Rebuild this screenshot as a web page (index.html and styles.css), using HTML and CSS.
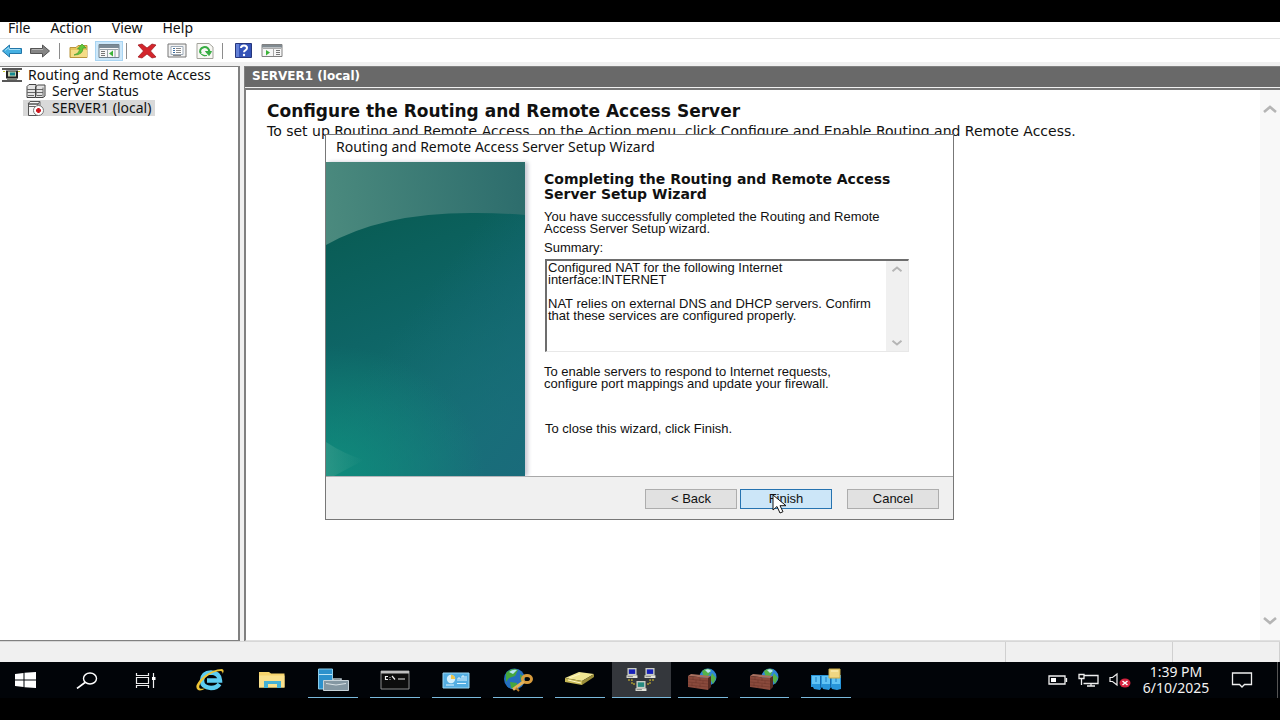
FILE: index.html
```html
<!DOCTYPE html>
<html lang="en">
<head>
<meta charset="utf-8">
<title>Routing and Remote Access</title>
<link rel="stylesheet" href="styles.css">
</head>
<body>
<svg class="defs" aria-hidden="true">
  <defs>
    <symbol id="chev-up" viewBox="0 0 16 10"><path d="M2 8 8 3l6 5" fill="none" stroke="currentColor" stroke-width="2.6"/></symbol>
    <symbol id="chev-down" viewBox="0 0 16 10"><path d="M2 2 8 7l6-5" fill="none" stroke="currentColor" stroke-width="2.6"/></symbol>
    <symbol id="firewall" viewBox="0 0 32 24">
      <circle cx="21" cy="9" r="8.5" fill="#2f86d8"/>
      <path d="M15 3q5-4 9-1l-2 5-5 3zM25 5l4 5-3 6-3-5z" fill="#55b34a"/>
      <path d="M18 2q4-2 6 1l-3 2z" fill="#bfe6f5"/>
      <path d="m1 8 3-2 20 2-3 2z" fill="#a8705f"/>
      <path d="m1 8 20 2v12L1 19z" fill="#8a4a3c"/>
      <path d="m21 10 3-2v11l-3 3z" fill="#552a22"/>
      <path d="m1 11 20 2M1 14l20 2M1 17l20 2M6 9v3M13 10v3M9 12v3M16 13v3M5 15v3M13 16v3M9 18v2" stroke="#6b342a" stroke-width=".5"/>
    </symbol>
    <symbol id="pc" viewBox="0 0 12 11">
      <path d="M1 0h10v8H1z" fill="#c9ccc4"/><path d="M2.500 1.500h7v5h-7z" fill="currentColor"/>
      <path d="M0 8h12v3H0z" fill="#e4e5dc"/><path d="M1 9.500h6" stroke="#777"/>
    </symbol>
  </defs>
</svg>
<div class="screen">
  <nav class="menubar">
    <button>File</button><button>Action</button><button>View</button><button>Help</button>
  </nav>
  <div class="toolbar">
    <button aria-label="Back"><svg width="22" height="16" viewBox="0 0 22 16"><path d="m1.500 8 7-6v3.500h12v5h-12V14z" fill="#45b0e2" stroke="#2376a8"/><path d="M4 7.500 8 4.500v2h11" fill="none" stroke="#a4def5"/></svg></button>
    <button aria-label="Forward"><svg width="22" height="16" viewBox="0 0 22 16"><path d="m20.500 8-7-6v3.500h-12v5h12V14z" fill="#858585" stroke="#555"/><path d="M3 6.500h11" stroke="#b5b5b5"/></svg></button>
    <span class="sep"></span>
    <button aria-label="Up one level"><svg width="20" height="16" viewBox="0 0 20 16"><path d="M1 4.500h6l2-2h9v12H1z" fill="#e9c65c" stroke="#b9953d"/><path d="M2 7h16v7H2z" fill="#f5dc86"/><path d="M5 12q5-1 6-6H8.500L13 1l4 4h-3q0 7-9 7z" fill="#62c83c" stroke="#3d9929" stroke-width=".7"/></svg></button>
    <button class="on" aria-label="Show console tree"><svg width="22" height="14" viewBox="0 0 22 14"><path d="M1 .5h20v13H1z" fill="#f7f7f7" stroke="#70808b"/><path d="M1 1h20v3H1z" fill="#7b8a95"/><path d="M2 5.500h18M9.500 5v8M17 6v7" stroke="#9aa3aa"/><path d="M3 7.500h4M3 9.500h4M3 11.500h4" stroke="#777"/><path d="m11 9.500 4-3v6z" fill="#3bb338"/></svg></button>
    <span class="sep close"></span>
    <button aria-label="Delete"><svg width="22" height="16" viewBox="0 0 22 16"><path d="m2 2 4-1 5 4 5-4 4 1-5.500 6L20 14l-4 1-5-4-5 4-4-1 5.500-6z" fill="#d3252c" stroke="#99161b" stroke-width=".7"/></svg></button>
    <button class="apart" aria-label="Properties"><svg width="20" height="15" viewBox="0 0 20 15"><path d="M1 1h18v13H1z" fill="#f2f2f2" stroke="#777"/><path d="M4 3.500h12v8H4z" fill="#fff" stroke="#9daab8"/><path d="M6 5.500h2M6 7.500h2M6 9.500h2" stroke="#3b6ca0"/><path d="M9 5.500h5M9 7.500h5M9 9.500h5M6 12.500h8" stroke="#888"/></svg></button>
    <button class="apart" aria-label="Refresh"><svg width="18" height="16" viewBox="0 0 18 16"><path d="M1 .5h12l4 3.500v11.500H1z" fill="#f8f8f4" stroke="#a3a39b"/><path d="M5 10.500A4.500 4 0 1 1 13 9" fill="none" stroke="#37ad43" stroke-width="2"/><path d="m9.500 8.500 6 0-2.500 4zM5 11q3 3 6 1.500" fill="#37ad43" stroke="#37ad43"/></svg></button>
    <span class="sep"></span>
    <button class="apart" aria-label="Help"><svg width="17" height="15" viewBox="0 0 17 15"><path d="M.5.500h16v14H.5z" fill="#3453b8" stroke="#26367c"/><path d="M1 1h3v13H1z" fill="#6380d6"/><path d="M6 5q0-2.500 3-2.500T12 5q0 1.500-1.700 2.300Q9 8 9 9.300" fill="none" stroke="#fff" stroke-width="2"/><circle cx="9" cy="12" r="1.200" fill="#fff"/></svg></button>
    <button class="apart" aria-label="Show action pane"><svg width="22" height="13" viewBox="0 0 22 13"><path d="M1 .5h20v12H1z" fill="#f7f7f7" stroke="#808080"/><path d="M1 1h20v2.500H1z" fill="#808a90"/><path d="M2 4.500h18M12.500 5v7" stroke="#aaa"/><path d="M15 6.500h4M15 8.500h4M15 10.500h4" stroke="#777"/><path d="m5 6 4 2.500-4 3z" fill="#3bb338"/></svg></button>
  </div>

  <main class="panes">
    <aside class="tree">
      <div class="node">
        <svg width="20" height="14" viewBox="0 0 20 14"><path d="M0 1h20M0 13h20" stroke="#222" stroke-width="1.600"/><path d="M4 2.500h12v8H4z" fill="#222"/><path d="M6 3.500h8v5H6z" fill="#c7d3b3"/><path d="M8 4.500h5v3H8z" fill="#168b91"/><path d="M5 10h10v2H5z" fill="#7f8378"/><path d="M1 3h2v1H1zM16 3h2v1h-2z" fill="#c8c82f"/></svg>
        <span>Routing and Remote Access</span>
      </div>
      <div class="node child">
        <svg width="20" height="14" viewBox="0 0 20 14"><path d="M1 2.500 3 .5h7v11l-1 2H1zM9.500 3l2-2H19v11l-2 1.500H9.500z" fill="#e4e4e4" stroke="#444"/><path d="M1 5.500h8M1 8.500h8M10 5.500h7M10 8.500h7M17 3.500v9M2 11.500h6M11 11.500h5" stroke="#666"/></svg>
        <span>Server Status</span>
      </div>
      <div class="node child">
        <div class="selected">
          <svg width="20" height="15" viewBox="0 0 20 15"><path d="M2 3 4 .5h10L12 3zM2.500 3H12v11.500H2.500z" fill="#f5f5f5" stroke="#555"/><path d="M3 5.500h8M14 1v5" stroke="#666"/><circle cx="12.500" cy="9.500" r="5" fill="#fff" stroke="#777"/><path d="M12.500 7v5M10 9.500h5" stroke="#cc141c" stroke-width="2.400"/></svg>
          <span>SERVER1 (local)</span>
        </div>
      </div>
    </aside>
    <section class="detail">
      <h1 class="detail-title">SERVER1 (local)</h1>
      <div class="detail-body">
        <div class="detail-text">
          <h2>Configure the Routing and Remote Access Server</h2>
          <p>To set up Routing and Remote Access, on the Action menu, click Configure and Enable Routing and Remote Access.</p>
        </div>
        <div class="scroll page"><svg width="16" height="10"><use href="#chev-up"/></svg><svg width="16" height="10"><use href="#chev-down"/></svg></div>
      </div>
    </section>
  </main>
  <footer class="status"><span></span><span></span><span></span></footer>

  <div class="taskbar">
    <button class="start" aria-label="Start"><svg width="21" height="16" viewBox="0 0 21 16"><path d="M0 2 8.500 1v6.500H0zM9.500.800 21 0v7.500H9.500zM0 8.500h8.500V15L0 14zM9.500 8.500H21V16l-11.500-.8z" fill="#fff"/></svg></button>
    <div class="tasks">
      <button aria-label="Search"><svg width="22" height="17" viewBox="0 0 22 17"><ellipse cx="14" cy="6.500" rx="6.500" ry="5.500" fill="none" stroke="#fff" stroke-width="1.400"/><path d="m9 10.500-8 6" stroke="#fff" stroke-width="1.600"/></svg></button>
      <button class="view" aria-label="Task view"><svg width="22" height="15" viewBox="0 0 22 15"><path d="M1.500 0v2.500h12V0M1.500 15v-2.500h12V15M1.500 4.500h12v6h-12zM18.500 0v4M18.500 7v8" fill="none" stroke="#eee" stroke-width="1.200"/><path d="M17 4h3.500v3H17z" fill="#fff"/></svg></button>
      <button aria-label="Internet Explorer"><svg width="30" height="24" viewBox="0 0 30 24"><path d="M24.500 16Q22 20 16 20 7 19.500 7 12.500 7.500 5 16 4.500q8.500.5 9 8H12" fill="none" stroke="#5ccdf2" stroke-width="4.400"/><path d="M3 22q-5-4 5-13Q18 1 27 1q3 1 .5 5 .5-3-2-3Q18 3 10 10 2 18 5 20.500q3 1 7-1-6 4-9 2.500z" fill="#eec436"/></svg></button>
      <button aria-label="File Explorer"><svg width="28" height="18" viewBox="0 0 28 18"><path d="M1 1h10l2 1.500h13.500V16.500H1z" fill="#f6d36c"/><path d="M1 4.500h25.500v12H1z" fill="#fae18c"/><path d="M6 10h17v7h-4v-4h-9v4H6z" fill="#45b1d5"/></svg></button>
      <button class="run" aria-label="Server Manager"><svg width="32" height="24" viewBox="0 0 32 24"><path d="M1.500 1h14v20h-14z" fill="#2c91cc" stroke="#8accea"/><path d="M2 6.500h13" stroke="#bde4f5"/><path d="M16 12.500v-1.500h8v1.500" fill="none" stroke="#b9c6cc" stroke-width="1.600"/><path d="M6.500 12.500h25v10h-25z" fill="#8497a2" stroke="#c8d3d9"/><path d="M9 15.500q10 3 20 0" fill="none" stroke="#d9e2e6"/></svg></button>
      <button class="run" aria-label="Command Prompt"><svg width="30" height="20" viewBox="0 0 30 20"><path d="M1 1h28v18H1z" fill="#0d0d0d" stroke="#8c8c8c"/><path d="M1 1h28v2.500H1z" fill="#bfbfbf"/><path d="M8 6.500H5.500v3H8M10 7v.8M10 9v.8M12 6l3 3.500M18 9h7" fill="none" stroke="#eee" stroke-width="1.200"/></svg></button>
      <button class="run" aria-label="Control Panel"><svg width="28" height="17" viewBox="0 0 28 17"><path d="M1 1h26v15H1z" fill="#54aee2" stroke="#9ad7f4"/><circle cx="9" cy="7" r="4.200" fill="#d3effb"/><path d="M9 7V2.800A4.200 4.200 0 0 1 13.200 7z" fill="#efc64b"/><path d="M16 9V6h2v3M20 9V4h2v5M15 11.500h9M4 13h8M24 4v5" stroke="#dff4ff" fill="none"/></svg></button>
      <button class="run" aria-label="Network access"><svg width="32" height="24" viewBox="0 0 32 24"><circle cx="12.500" cy="11" r="10.500" fill="#246fbf"/><path d="M4 5q6-6 12-3l-3 6-6 2-3 4zM8 14l7 1-1 6-5-1zM18 6l5 4-4 4z" fill="#45a63f"/><path d="M7 4q4-3 8-2l-4 4z" fill="#b4e4f4"/><ellipse cx="25" cy="11" rx="4.500" ry="3.500" fill="none" stroke="#d79b3d" stroke-width="3"/><path d="m22 13.500-11 8" stroke="#e4b35a" stroke-width="3"/><path d="m14 20 3 3" stroke="#b67b2a" stroke-width="2"/></svg></button>
      <button class="run" aria-label="Network tool"><svg class="raise" width="32" height="14" viewBox="0 0 32 14"><path d="m1 7 14-6 15 2-12 7z" fill="#f1e793"/><path d="m1 7 17 3v4L1 11z" fill="#c8b955"/><path d="m18 10 12-7v3l-12 8z" fill="#9a8d39"/><path d="m5 7 11-4M4 9l13 3" stroke="#fff8c8"/></svg></button>
      <button class="run active" aria-label="Routing and Remote Access"><svg width="32" height="24" viewBox="0 0 32 24"><use href="#pc" x="1" y="0" width="12" height="10" color="#1720b8"/><use href="#pc" x="19" y="0" width="12" height="10" color="#1720b8"/><use href="#pc" x="10" y="13" width="12" height="10" color="#258a80"/><path d="M3 12h4v4h3M29 12h-4v4h-3" fill="none" stroke="#a99931" stroke-width="1.400" stroke-dasharray="2 1"/></svg></button>
      <button class="run" aria-label="Windows Firewall"><svg width="32" height="24"><use href="#firewall"/></svg></button>
      <button class="run" aria-label="Windows Firewall rules"><svg width="32" height="24"><use href="#firewall"/></svg></button>
      <button class="run" aria-label="Server tools"><svg width="32" height="24" viewBox="0 0 32 24"><path d="M1 7h30v14l-4 1-5-1-1-2-2 3-6-1-1-2-2 3-6-1-1-2H1z" fill="#2795da"/><path d="M2 8h8v8H2zM12 8h8v8h-8zM22 8h8v8h-8z" fill="#62c4f5"/><path d="M6 9v5M16 9v5M26 9v5" stroke="#1b7cc4"/><path d="M10.500 8v12M20.500 8v12" stroke="#126bb0"/><path d="M19 1h11v9H19z" fill="#efd682" stroke="#c9a948"/><path d="M21 3h7" stroke="#fff4c0"/></svg></button>
    </div>
    <div class="tray">
      <svg width="20" height="10" viewBox="0 0 20 10"><path d="M1 1h16v8H1zM18.500 3v4" fill="none" stroke="#eee" stroke-width="1.300"/><path d="M3 3h5v4H3z" fill="#fff"/></svg>
      <svg width="21" height="14" viewBox="0 0 21 14"><path d="M6 2.500h14v8H5.500M9 13h8M13 10.500V13" fill="none" stroke="#eee" stroke-width="1.300"/><path d="M1 1.500h5v4H1zM3.500 5.500V12" fill="#000" stroke="#eee" stroke-width="1.300"/></svg>
      <svg class="volume" width="22" height="16" viewBox="0 0 22 16"><path d="M1 5.500h2.500L8 2v11L3.500 9.500H1z" fill="none" stroke="#eee" stroke-width="1.200"/><ellipse cx="16" cy="11" rx="5.500" ry="4.500" fill="#d5233f"/><path d="m13.500 9 5 4M18.500 9l-5 4" stroke="#fff" stroke-width="1.500"/></svg>
      <div class="clock"><span>1:39 PM</span><span>6/10/2025</span></div>
      <svg width="22" height="16" viewBox="0 0 22 16"><path d="M1.500 1h19v11.500h-7L11 15l-2.500-2.500h-7z" fill="none" stroke="#eee" stroke-width="1.300"/></svg>
    </div>
    <span class="peek"></span>
  </div>

  <div class="wizard" role="dialog" aria-labelledby="wizard-title">
    <div class="wizard-title" id="wizard-title">Routing and Remote Access Server Setup Wizard</div>
    <div class="wizard-body">
      <svg class="banner" viewBox="0 0 199 314" preserveAspectRatio="none" aria-hidden="true">
        <defs>
          <linearGradient id="sky" x1="0" y1="0.200" x2="1" y2="0"><stop offset="0" stop-color="#4b8a7e"/><stop offset="1" stop-color="#2c6c6c"/></linearGradient>
          <linearGradient id="hill" x1="0" y1="0" x2="0.300" y2="1"><stop offset="0" stop-color="#085b52"/><stop offset=".5" stop-color="#0e6566"/><stop offset="1" stop-color="#147474"/></linearGradient>
          <linearGradient id="blue" x1="0" y1="0" x2="1" y2="1"><stop offset=".4" stop-color="#1a6b7b" stop-opacity="0"/><stop offset="1" stop-color="#1a6b7b"/></linearGradient>
          <radialGradient id="glow" cx="0" cy="1" r=".8"><stop offset="0" stop-color="#0f8c7c"/><stop offset="1" stop-color="#0f8c7c" stop-opacity="0"/></radialGradient>
          <linearGradient id="ray"><stop offset="0" stop-color="#3b9c8c" stop-opacity=".6"/><stop offset="1" stop-color="#3b9c8c" stop-opacity="0"/></linearGradient>
        </defs>
        <path d="M0 0h199v314H0z" fill="url(#sky)"/>
        <path d="M0 83Q58 50 150 51q25 0 49 2v261H0z" fill="url(#hill)"/>
        <path d="M0 83Q58 50 150 51q25 0 49 2v261H0z" fill="url(#blue)"/>
        <path d="M0 150h199v164H0z" fill="url(#glow)"/>
        <path d="M0 280q18 12 38 18L8 314H0z" fill="url(#ray)"/>
      </svg>
      <div class="wizard-copy">
        <h3>Completing the Routing and Remote Access<br>Server Setup Wizard</h3>
        <p>You have successfully completed the Routing and Remote<br>Access Server Setup wizard.</p>
        <label for="summary">Summary:</label>
        <div class="summary">
          <textarea id="summary" readonly>Configured NAT for the following Internet
interface:INTERNET

NAT relies on external DNS and DHCP servers. Confirm
that these services are configured properly.</textarea>
          <div class="scroll"><svg width="12" height="8"><use href="#chev-up"/></svg><svg width="12" height="8"><use href="#chev-down"/></svg></div>
        </div>
        <p>To enable servers to respond to Internet requests,<br>configure port mappings and update your firewall.</p>
        <p class="closing">To close this wizard, click Finish.</p>
      </div>
    </div>
    <div class="wizard-actions">
      <button>&lt; Back</button>
      <button class="primary">Finish</button>
      <button class="cancel">Cancel</button>
    </div>
  </div>
  <svg class="cursor" width="15" height="21" viewBox="0 0 15 21" aria-hidden="true"><path d="M1 1v15l4-3.500 3 6.500 3-1.300-3-6h6z" fill="#fff" stroke="#111"/></svg>
</div>
</body>
</html>
```
FILE: styles.css
```css
* { box-sizing: border-box; }
body { margin: 0; background: #000; color: #111; font: 14px/16px "Noto Sans", "Open Sans", sans-serif; }
h1, h2, h3, p { margin: 0; }
button { font: inherit; color: inherit; border: 0; padding: 0; margin: 0; background: none; }
svg { display: block; flex: none; }
.defs { position: absolute; width: 0; height: 0; }
.screen { position: relative; display: flex; flex-direction: column; height: 100vh; min-height: 620px; padding: 22px 0; overflow: hidden; }

.menubar { display: flex; gap: 20px; height: 16px; padding: 0 8px; background: #fff; line-height: 12px; flex: none; }
.menubar button { height: 12px; }
.toolbar { display: flex; align-items: center; gap: 6px; height: 24px; background: #fff; border-top: 1px solid #e3e3e3; flex: none; padding-left: 1px; }
.toolbar .on { display: flex; align-items: center; justify-content: center; width: 28px; height: 20px; background: #cde8fa; border: 1px solid #a8d4f2; }
.toolbar .apart { margin-left: 3px; }
.sep { width: 1px; height: 16px; background: #8c8c8c; margin: 0 3px 0 2px; }
.sep.close { margin: 0 3px 0 -3px; }

.panes { flex: 1; display: flex; gap: 4px; min-height: 0; padding-top: 4px; background: #f0f0f0; }
.tree { width: 240px; background: #fff; border: solid #808080; border-width: 1px 2px 1px 0; flex: none; }
.node { display: flex; align-items: center; gap: 6px; height: 16px; padding-left: 2px; white-space: nowrap; }
.node.child { padding-left: 26px; }
.node:last-child { margin-top: 1px; }
.selected { display: flex; align-items: center; gap: 6px; height: 16px; background: #d9d9d9; margin-left: -3px; padding: 0 4px 0 3px; }
.detail { flex: 1; min-width: 0; display: flex; flex-direction: column; border-left: 1px solid #808080; }
.detail-title { height: 21px; background: #696969; color: #fff; font: bold 12px/19px "DejaVu Sans", sans-serif; padding-left: 7px; border-top: 1px solid #808080; }
.detail-body { flex: 1; display: flex; min-height: 0; background: #fff; margin-top: 1px; border-top: 2px solid #777; border-left: 1px solid #808080; border-bottom: 1px solid #e0e0e0; }
.detail-text { flex: 1; min-width: 0; padding: 11px 0 0 21px; font-family: "DejaVu Sans", sans-serif; white-space: nowrap; }
.detail-text h2 { font-size: 17px; line-height: 20px; }
.detail-text p { font-size: 14px; line-height: 20px; }
.scroll { display: flex; flex-direction: column; justify-content: space-between; align-items: center; width: 22px; padding: 4px 0; background: #f0f0f0; color: #b5b5b5; flex: none; }
.scroll.page { width: 20px; background: #f8f8f8; padding: 14px 0; }
.status { display: flex; height: 21px; background: #f0f0f0; border-top: 1px solid #d7d7d7; flex: none; }
.status span { flex: 1; border-right: 1px solid #d0d0d0; }
.status span:nth-child(2) { flex: none; width: 167px; }
.status span:nth-child(3) { flex: none; width: 107px; }

.taskbar { display: flex; height: 36px; background: #010408; color: #f2f2f2; flex: none; }
.start { display: flex; align-items: center; width: 56px; padding-left: 15px; }
.tasks { display: grid; grid-template-columns: repeat(13, 1fr); width: 801px; }
.tasks button { display: flex; align-items: center; justify-content: center; position: relative; }
.tasks .view { padding-right: 4px; }
.tasks .run::after { content: ""; position: absolute; left: 6px; right: 6px; bottom: 0; height: 1px; background: #79b9dc; }
.tasks .active { background: #34373c; margin: 0 1px; }
.tasks .active::after { left: 0; right: 0; }
.raise { margin-bottom: 4px; }
.tray { display: flex; align-items: center; gap: 10px; margin-left: auto; padding-right: 24px; }
.clock { display: flex; flex-direction: column; align-items: center; width: 70px; margin-right: 10px; line-height: 16px; }
.peek { width: 1px; background: #555; margin-right: 2px; }

.wizard { position: absolute; left: 325px; top: 134px; width: 629px; display: flex; flex-direction: column; background: #fff; border: 1px solid #777; font-family: "Liberation Sans", Arial, sans-serif; font-size: 13px; line-height: 12px; white-space: nowrap; }
.wizard-title { height: 27px; padding-left: 10px; font: 14px/24px "Noto Sans", sans-serif; }
.wizard-body { display: flex; height: 315px; border-bottom: 1px solid #a8a8a8; }
.banner { width: 199px; height: 314px; box-shadow: 3px 0 4px #c9c9d4; }
.wizard-copy { padding: 10px 0 0 19px; }
.wizard-copy h3 { font: bold 14px/15px "DejaVu Sans", sans-serif; margin-bottom: 9px; }
.wizard-copy p { margin-bottom: 7px; }
.wizard-copy label { display: block; }
.summary { display: flex; width: 364px; height: 93px; margin: 5px 0 14px 1px; border: solid; border-width: 2px 1px 1px 2px; border-color: #6d6d6d #e8e8e8 #e8e8e8 #6d6d6d; }
.summary textarea { flex: 1; min-width: 0; border: 0; padding: 1px 0 0 1px; resize: none; outline: 0; overflow: hidden; font: inherit; color: inherit; white-space: pre; }
.wizard-copy .closing { margin-top: 33px; padding-left: 1px; }
.wizard-actions { display: flex; justify-content: flex-end; align-items: center; gap: 3px; height: 42px; padding: 1px 14px 0 0; background: #f0f0f0; }
.wizard-actions button { width: 92px; height: 20px; background: #e1e1e1; border: 1px solid #adadad; }
.wizard-actions .primary { background: #cce6f8; border: 1px solid #2673b0; }
.wizard-actions .cancel { margin-left: 12px; }
.cursor { position: absolute; left: 772px; top: 494px; }
```
